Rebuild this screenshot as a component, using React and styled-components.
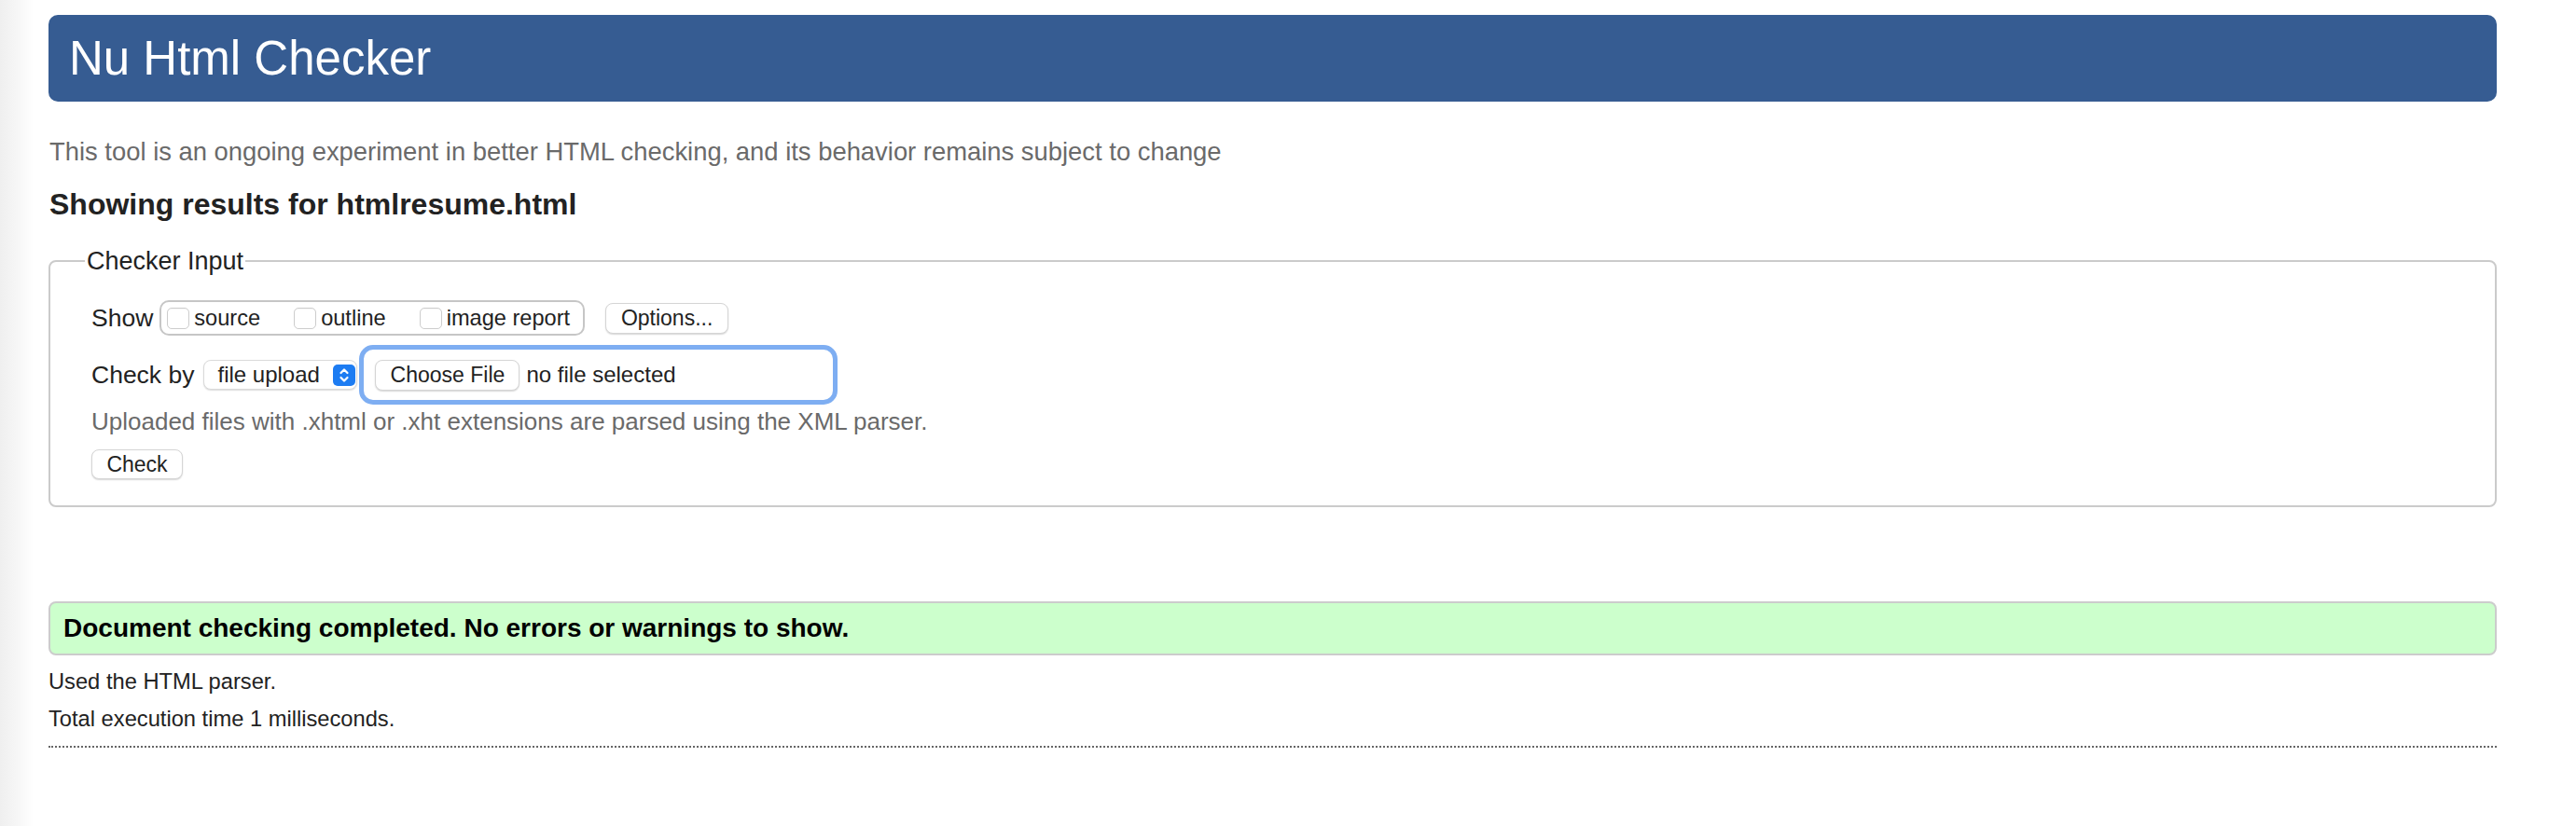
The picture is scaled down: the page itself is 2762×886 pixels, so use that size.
import styled, { createGlobalStyle } from 'styled-components';

const GlobalStyle = createGlobalStyle`
  html, body {
    margin: 0;
    padding: 0;
  }
  body {
    font-family: "Liberation Sans", Arial, sans-serif;
    color: #222;
    background: linear-gradient(to right, #efefef 0px, #f6f6f6 18px, #fcfcfc 30px, #fff 36px);
    min-height: 886px;
  }
`;

const Page = styled.div`
  padding: 16px 85px 40px 52px;
`;

const Banner = styled.h1`
  margin: 0;
  height: 93px;
  border-radius: 10px;
  background: #365c92;
  color: #fff;
  font-size: 51px;
  font-weight: normal;
  padding-left: 22px;
  display: flex;
  align-items: center;
`;

const Intro = styled.p`
  margin: 39px 0 0 1px;
  font-size: 27.4px;
  line-height: 30px;
  color: #6a6a6a;
`;

const ResultsTitle = styled.h2`
  margin: 23px 0 0 1px;
  font-size: 32px;
  line-height: 36px;
  font-weight: bold;
  color: #222;
`;

const Panel = styled.fieldset`
  margin: 28px 0 0 0;
  min-width: 0;
  border: 2px solid #cbcbcb;
  border-radius: 8px;
  padding: 27px 20px 28px 44px;
`;

const PanelTitle = styled.legend`
  font-size: 27px;
  line-height: 30px;
  padding: 0 2px;
  margin-left: -7px;
  color: #222;
`;

const Row = styled.div`
  display: flex;
  align-items: center;
  height: ${props => props.height}px;
  margin-top: ${props => props.gap || 0}px;
`;

const RowLabel = styled.span`
  font-size: 26.5px;
  color: #222;
  margin-right: ${props => props.space}px;
`;

const ToggleGroup = styled.div`
  display: flex;
  align-items: center;
  gap: 36px;
  height: 38px;
  box-sizing: border-box;
  border: 2px solid #c6c6c6;
  border-radius: 10px;
  padding: 0 14px 0 6px;
`;

const Toggle = styled.label`
  display: flex;
  align-items: center;
  gap: 5px;
  font-size: 23.6px;
  color: #222;
`;

const Box = styled.input`
  appearance: none;
  margin: 0;
  width: 24px;
  height: 23px;
  box-sizing: border-box;
  border: 1.5px solid #cdcdcd;
  border-radius: 5px;
  background: #fff;
  box-shadow: inset 0 1px 1px rgba(0, 0, 0, 0.04);
`;

const PlainButton = styled.button`
  margin: 0 0 0 ${props => props.offset || 0}px;
  width: ${props => props.w}px;
  height: ${props => props.h}px;
  box-sizing: border-box;
  border: 1px solid #d5d5d5;
  border-radius: 8px;
  background: #fff;
  box-shadow: 0 1px 1.5px rgba(0, 0, 0, 0.16);
  font-family: "Liberation Sans", Arial, sans-serif;
  font-size: 23px;
  color: #222;
  padding: 0;
  flex: none;
`;

const Picker = styled.div`
  display: flex;
  align-items: center;
  width: 165px;
  height: 32px;
  box-sizing: border-box;
  border: 1px solid #dadada;
  border-radius: 8px;
  background: #fff;
  box-shadow: 0 1px 1.5px rgba(0, 0, 0, 0.14);
  padding-left: 14px;
  font-size: 24px;
  color: #222;
`;

const Stepper = styled.span`
  margin-left: auto;
  margin-right: 1px;
  width: 24px;
  height: 23px;
  border-radius: 5px;
  background: #1d7cf2;
  display: flex;
  align-items: center;
  justify-content: center;
`;

const FileRing = styled.div`
  display: flex;
  align-items: center;
  margin-left: 2px;
  width: 513px;
  height: 64px;
  box-sizing: border-box;
  border: 5px solid #7eaef2;
  border-radius: 15px;
  padding: 0 12px;
`;

const FileStatus = styled.span`
  margin-left: 7px;
  font-size: 24px;
  color: #222;
`;

const Hint = styled.p`
  margin: 3px 0 0 0;
  font-size: 26px;
  line-height: 30px;
  color: #6a6a6a;
`;

const CheckLine = styled.div`
  margin-top: 15px;
`;

const SuccessBox = styled.div`
  margin-top: 101px;
  height: 58px;
  box-sizing: border-box;
  border: 2px solid #cccccc;
  border-radius: 8px;
  background: #ccffcc;
  padding-left: 14px;
  display: flex;
  align-items: center;
  font-size: 28px;
  font-weight: bold;
  color: #000;
`;

const Detail = styled.p`
  margin: ${props => props.gap}px 0 0 0;
  font-size: 23.7px;
  line-height: 27px;
  color: #222;
`;

const Rule = styled.hr`
  margin: 15px 0 0 0;
  border: 0;
  border-top: 2px dotted #666;
  height: 0;
`;

function StepperIcon() {
  return (
    <Stepper>
      <svg width="12" height="17" viewBox="0 0 12 17" fill="none" stroke="#fff" strokeWidth="2.2" strokeLinecap="round" strokeLinejoin="round">
        <path d="M2.5 6 L6 2.5 L9.5 6" />
        <path d="M2.5 11 L6 14.5 L9.5 11" />
      </svg>
    </Stepper>
  );
}

const toggles = ['source', 'outline', 'image report'];

export default function App() {
  return (
    <>
      <GlobalStyle />
      <Page>
        <Banner>Nu Html Checker</Banner>
        <Intro>This tool is an ongoing experiment in better HTML checking, and its behavior remains subject to change</Intro>
        <ResultsTitle>Showing results for htmlresume.html</ResultsTitle>

        <Panel>
          <PanelTitle>Checker Input</PanelTitle>
          <Row height={38}>
            <RowLabel space={7}>Show</RowLabel>
            <ToggleGroup>
              {toggles.map(name => (
                <Toggle key={name}>
                  <Box type="checkbox" />
                  {name}
                </Toggle>
              ))}
            </ToggleGroup>
            <PlainButton offset={22} w={132} h={33}>Options...</PlainButton>
          </Row>
          <Row height={64} gap={10}>
            <RowLabel space={10}>Check by</RowLabel>
            <Picker>
              file upload
              <StepperIcon />
            </Picker>
            <FileRing>
              <PlainButton w={155} h={33}>Choose File</PlainButton>
              <FileStatus>no file selected</FileStatus>
            </FileRing>
          </Row>
          <Hint>Uploaded files with .xhtml or .xht extensions are parsed using the XML parser.</Hint>
          <CheckLine>
            <PlainButton w={98} h={32}>Check</PlainButton>
          </CheckLine>
        </Panel>

        <SuccessBox>Document checking completed. No errors or warnings to show.</SuccessBox>
        <Detail gap={15}>Used the HTML parser.</Detail>
        <Detail gap={13}>Total execution time 1 milliseconds.</Detail>
        <Rule />
      </Page>
    </>
  );
}
